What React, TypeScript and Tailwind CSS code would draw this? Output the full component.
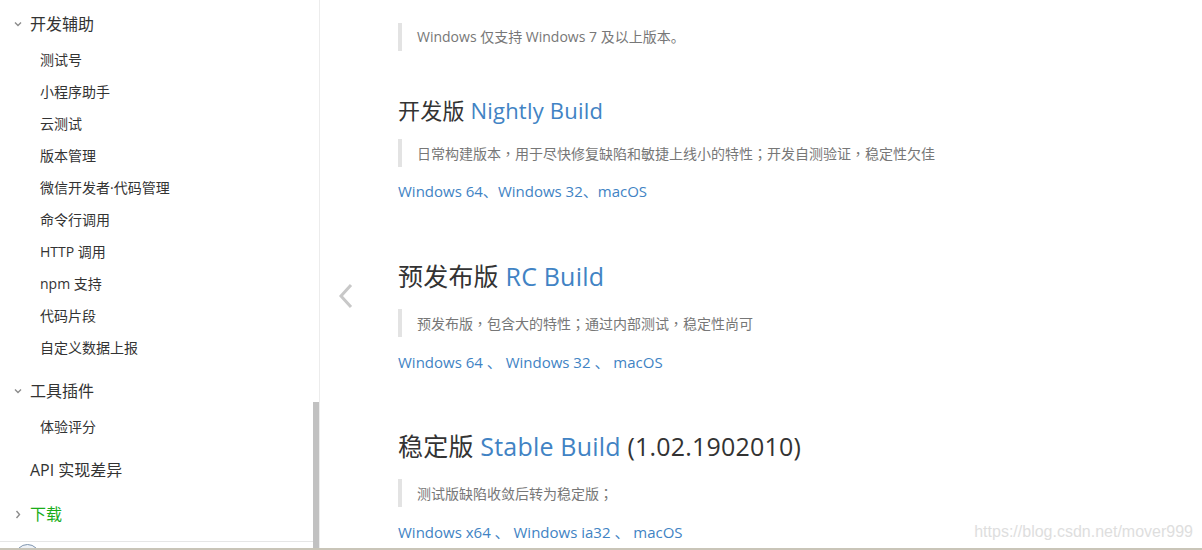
import React from 'react';

const font = { fontFamily: '"Open Sans", "Noto Sans CJK SC", sans-serif' };
const tc = { fontFamily: '"Noto Sans CJK TC", sans-serif' };

function Down() {
  return (
    <svg width="8" height="6" viewBox="0 0 8 6" className="shrink-0">
      <path d="M1 1.5 L4 4.5 L7 1.5" fill="none" stroke="#8c8c8c" strokeWidth="1.4" />
    </svg>
  );
}

function Right() {
  return (
    <svg width="6" height="9" viewBox="0 0 6 9" className="shrink-0">
      <path d="M1.5 1 L4.5 4.5 L1.5 8" fill="none" stroke="#8c8c8c" strokeWidth="1.4" />
    </svg>
  );
}

const devItems = ['测试号', '小程序助手', '云测试', '版本管理', '微信开发者·代码管理', '命令行调用', 'HTTP 调用', 'npm 支持', '代码片段', '自定义数据上报'];

// centred full-width punctuation, as the reference renders it
function Cn({ text }: { text: string }) {
  return (
    <>
      {text.split(/([，；])/).map((p, i) =>
        p === '，' || p === '；' ? <span key={i} style={tc}>{p}</span> : <span key={i}>{p}</span>
      )}
    </>
  );
}

function Quote({ text, className = '' }: { text: string; className?: string }) {
  return (
    <div className={`border-l-4 border-[#e3e3e3] pl-[15px] h-[28px] leading-[28px] text-[14px] text-[#777] ${className}`}>
      <Cn text={text} />
    </div>
  );
}

function Links({ items, sep, className = '' }: { items: string[]; sep: string; className?: string }) {
  return (
    <div className={`h-[24px] leading-[24px] text-[15px] text-[#4183c4] ${className}`}>
      {items.map((t, i) => (
        <span key={t}>
          {t}
          {i < items.length - 1 && <span>{sep}</span>}
        </span>
      ))}
    </div>
  );
}

export default function App() {
  return (
    <div className="w-[1202px] h-[550px] flex flex-col overflow-hidden bg-white text-[#333]" style={font}>
      <div className="flex h-[548px]">
        {/* sidebar */}
        <aside className="relative w-[320px] shrink-0 border-r border-[#ececec] overflow-hidden">
          <div className="pt-[8px] w-[313px]">
            <div className="h-8 flex items-center pl-[14px] gap-[8px] text-[16px]">
              <Down />
              <span>开发辅助</span>
            </div>
            <ul className="mt-[3px]">
              {devItems.map(t => (
                <li key={t} className="h-8 flex items-center pl-[40px] text-[14px]">{t}</li>
              ))}
            </ul>
            <div className="mt-[12px] h-8 flex items-center pl-[14px] gap-[8px] text-[16px]">
              <Down />
              <span>工具插件</span>
            </div>
            <div className="mt-[3px] h-8 flex items-center pl-[40px] text-[14px]">体验评分</div>
            <div className="mt-[12px] h-8 flex items-center pl-[30px] text-[16px]">API 实现差异</div>
            <div className="mt-[12px] h-8 flex items-center pl-[15px] gap-[9px] text-[16px] text-[#1aad19]">
              <Right />
              <span>下载</span>
            </div>
            <div className="mt-[11px] border-t border-[#e6e6e6]" />
            <div className="mt-[2px] ml-[15px] w-[25px] h-[25px] rounded-full border border-[#7f95ae] bg-[#eef2f7]" />
          </div>
          {/* scrollbar thumb */}
          <div className="absolute right-0 top-[402px] bottom-0 w-[6px] bg-[#c1c1c1]" />
        </aside>

        {/* main */}
        <main className="relative flex-1 pl-[78px] pt-[23px]">
          <svg width="16" height="26" viewBox="0 0 16 26" className="absolute left-[18px] top-[283px]">
            <path d="M13 2 L3 13 L13 24" fill="none" stroke="#c8c8c8" strokeWidth="3" />
          </svg>

          <Quote text="Windows 仅支持 Windows 7 及以上版本。" />

          <h3 className="mt-[43px] h-[32px] leading-[32px] text-[22px] tracking-[0.2px]">
            开发版 <span className="text-[#4183c4]">Nightly Build</span>
          </h3>
          <Quote className="mt-[13px]" text="日常构建版本，用于尽快修复缺陷和敏捷上线小的特性；开发自测验证，稳定性欠佳" />
          <Links className="mt-[12px]" items={['Windows 64', 'Windows 32', 'macOS']} sep="、" />

          <h2 className="mt-[55px] h-[36px] leading-[36px] text-[25px] tracking-[0.2px]">
            预发布版 <span className="text-[#4183c4]">RC Build</span>
          </h2>
          <Quote className="mt-[15px]" text="预发布版，包含大的特性；通过内部测试，稳定性尚可" />
          <Links className="mt-[13px]" items={['Windows 64', 'Windows 32', 'macOS']} sep=" 、 " />

          <h2 className="mt-[54px] h-[36px] leading-[36px] text-[25px] tracking-[0.2px]">
            稳定版 <span className="text-[#4183c4]">Stable Build</span> (1.02.1902010)
          </h2>
          <Quote className="mt-[15px]" text="测试版缺陷收敛后转为稳定版；" />
          <Links className="mt-[13px]" items={['Windows x64', 'Windows ia32', 'macOS']} sep=" 、 " />

          <div
            className="absolute right-[9px] top-[521px] text-[16px] leading-[22px] text-[#dedede]"
            style={{ fontFamily: '"Liberation Sans", Arial, sans-serif' }}
          >
            https://blog.csdn.net/mover999
          </div>
        </main>
      </div>
      <div className="h-[2px] bg-[#c9c5b8]" />
    </div>
  );
}
